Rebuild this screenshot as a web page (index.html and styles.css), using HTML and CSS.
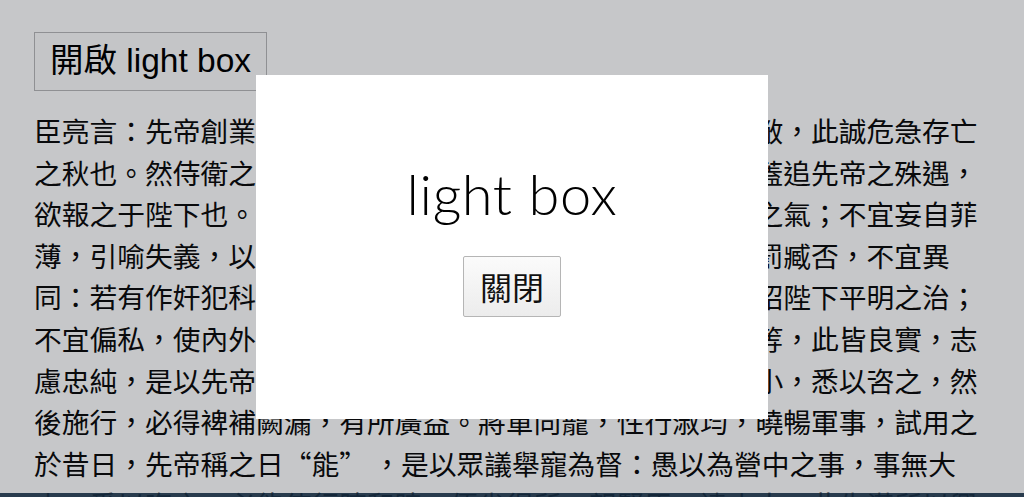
FILE: index.html
```html
<!DOCTYPE html>
<html lang="zh-Hant">
<head>
<meta charset="utf-8">
<title>light box</title>
<link rel="stylesheet" href="styles.css">
</head>
<body>
<div class="page">
  <button class="open-btn" type="button">開啟 light box</button>
  <p class="text">臣亮言：先帝創業未半，而中道崩殂；今天下三分，益州疲敝，此誠危急存亡之秋也。然侍衛之臣，不懈於內；忠志之士，忘身於外者，蓋追先帝之殊遇，欲報之于陛下也。誠宜開張聖聽，以光先帝遺德，恢弘志士之氣；不宜妄自菲薄，引喻失義，以塞忠諫之路也。宮中府中，俱為一體；陟罰臧否，不宜異同：若有作奸犯科，及為忠善者，宜付有司，論其刑賞，以昭陛下平明之治；不宜偏私，使內外異法也。侍中、侍郎郭攸之、費禕、董允等，此皆良實，志慮忠純，是以先帝簡拔以遺陛下。愚以為宮中之事，事無大小，悉以咨之，然後施行，必得裨補闕漏，有所廣益。將軍向寵，性行淑均，曉暢軍事，試用之於昔日，先帝稱之日“能” ，是以眾議舉寵為督：愚以為營中之事，事無大小，悉以咨之，必能使行陣和睦，優劣得所。親賢臣，遠小人，此先漢所以興隆也；親小人，遠賢臣，此後漢所以傾頹也。</p>
</div>
<div class="overlay">
  <div class="lightbox">
    <h1 class="lb-title">light box</h1>
    <button class="close-btn" type="button">關閉</button>
  </div>
</div>
<div class="desk-strip"></div>
</body>
</html>
```

FILE: styles.css
```css
html, body {
  margin: 0;
  padding: 0;
  background: #ffffff;
}

body {
  font-family: "Noto Sans CJK TC", "Noto Sans CJK SC", sans-serif;
  color: #111;
  overflow: hidden;
  height: 497px;
}

.page {
  display: flex;
  flex-direction: column;
  align-items: flex-start;
  gap: 19px;
  padding: 32px 34px 0 34px;
}

.open-btn {
  font-family: "Liberation Sans", "Noto Sans CJK TC", sans-serif;
  font-size: 33.5px;
  line-height: 38px;
  padding: 9px 15px 10px 15px;
  color: #000;
  background: #fdfdfd;
  border: 1px solid #b8b8ba;
  border-radius: 0;
  margin: 0;
}

.text {
  margin: 0;
  font-size: 27.75px;
  line-height: 41.6px;
  color: #0c0c0c;
  text-spacing-trim: space-all;
}

.overlay {
  position: fixed;
  left: 0;
  top: 0;
  right: 0;
  bottom: 4px;
  background: rgba(0, 4, 14, 0.225);
  display: flex;
  align-items: center;
  justify-content: center;
}

.lightbox {
  width: 512px;
  height: 344px;
  box-sizing: border-box;
  background: #ffffff;
  display: flex;
  flex-direction: column;
  align-items: center;
  justify-content: center;
  padding-bottom: 16px;
}

.lb-title {
  margin: 0 0 28px 0;
  font-family: "Lato", "Inter", sans-serif;
  font-weight: 300;
  font-size: 56px;
  line-height: 1.2;
  letter-spacing: 0.6px;
  color: #000;
}

.close-btn {
  font-family: "Noto Sans CJK TC", sans-serif;
  font-size: 32px;
  line-height: 38px;
  padding: 10px 16px 11px 16px;
  color: #111;
  background: linear-gradient(#fbfbfb, #ececec);
  border: 1px solid #b5b5b5;
  border-radius: 2px;
  margin: 0;
}

.desk-strip {
  position: fixed;
  left: 0;
  right: 0;
  bottom: 0;
  height: 4px;
  background: rgba(22, 42, 62, 0.92);
}
```
